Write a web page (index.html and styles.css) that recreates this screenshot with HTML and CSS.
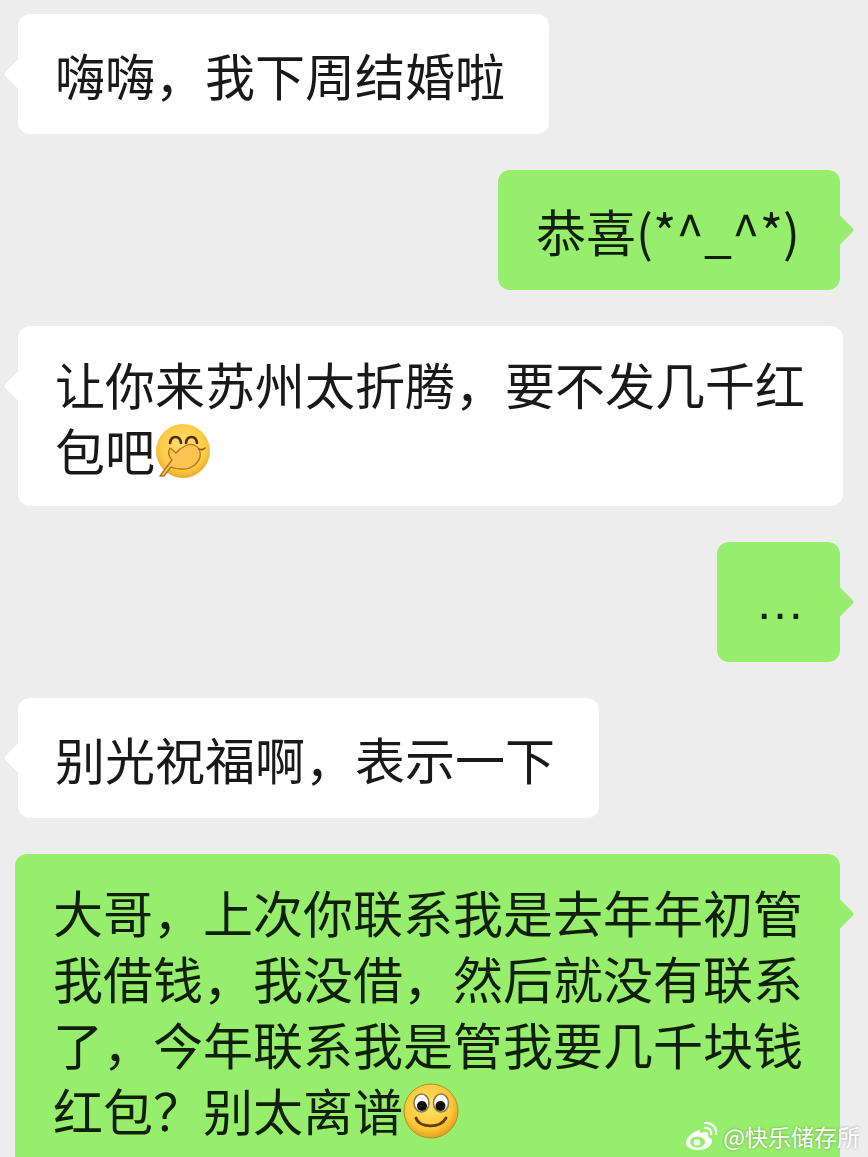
FILE: index.html
```html
<!DOCTYPE html>
<html lang="zh-CN">
<head>
<meta charset="utf-8">
<title>聊天记录</title>
<link rel="stylesheet" href="styles.css">
</head>
<body>
<main class="chat">
  <div class="bubble in short">嗨嗨，我下周结婚啦</div>
  <div class="bubble out short">恭喜(*^_^*)</div>
  <div class="bubble in wide"><p>让你来苏州太折腾，要不发几千红包吧<svg class="emoji" viewBox="0 0 56 56" aria-hidden="true">
    <defs><radialGradient id="f1" cx="0.5" cy="0.42" r="0.6"><stop offset="0" stop-color="#ffdf6b"/><stop offset="0.7" stop-color="#fbcb45"/><stop offset="1" stop-color="#eda52a"/></radialGradient></defs>
    <circle cx="28" cy="28" r="27" fill="url(#f1)"/>
    <path d="M18 20c1-8 10-8 11 0" transform="translate(-3 0)" fill="none" stroke="#4a2d12" stroke-width="2.6" stroke-linecap="round"/>
    <path d="M31 20c1-8 10-8 11 0" fill="none" stroke="#4a2d12" stroke-width="2.6" stroke-linecap="round"/>
    <path d="M5 53 L17 37 C13 33 13 28 15 25 C18 27 19 28 21 30 C26 24 34 20 39 22 C44 24 46 29 45 34 C43 41 35 47 27 46 C22 46 18 45 16 44 L9 53 Z" fill="#fbc452" stroke="#b5701f" stroke-width="1.3" stroke-linejoin="round"/>
    <path d="M44 26c2 1 4 1 6-1" fill="none" stroke="#8a5a1c" stroke-width="1.6" stroke-linecap="round"/>
  </svg></p></div>
  <div class="bubble out short dots"><span class="ellipsis">…</span></div>
  <div class="bubble in short">别光祝福啊，表示一下</div>
  <div class="bubble out last"><p>大哥，上次你联系我是去年年初管我借钱，我没借，然后就没有联系了，今年联系我是管我要几千块钱红包？别太离谱<svg class="emoji" viewBox="0 0 56 56" aria-hidden="true">
    <defs><radialGradient id="f2" cx="0.45" cy="0.4" r="0.62"><stop offset="0" stop-color="#ffe268"/><stop offset="0.7" stop-color="#fcc838"/><stop offset="1" stop-color="#e29a1e"/></radialGradient></defs>
    <circle cx="28" cy="28" r="27" fill="url(#f2)" stroke="#b98a2c" stroke-width="1"/>
    <ellipse cx="18.500" cy="20" rx="7.500" ry="9" fill="#fff" stroke="#8d7a4a" stroke-width="1.600"/>
    <ellipse cx="38" cy="20" rx="7.500" ry="9" fill="#fff" stroke="#8d7a4a" stroke-width="1.600"/>
    <circle cx="19" cy="23" r="5" fill="#0d0d0d"/>
    <circle cx="37.500" cy="23" r="5" fill="#0d0d0d"/>
    <path d="M13 35c3 10 24 11 30 0" fill="none" stroke="#6a3c0c" stroke-width="2.800" stroke-linecap="round"/>
  </svg></p></div>
</main>
<aside class="mark">
  <svg class="weibo" viewBox="0 0 34 30" aria-hidden="true">
    <path d="M14 9C7 11 1 17 1 22c0 4 6 7 12 7 8 0 14-4 14-9 0-3-3-4-4-4 1-3 0-5-3-5-2 0-4 1-5 1 0-2 0-4-1-3z" fill="#fff"/>
    <ellipse cx="12.500" cy="21" rx="7.500" ry="5.500" fill="#97ee6c"/>
    <circle cx="12" cy="21.500" r="3.300" fill="#fff"/>
    <path d="M20 2c6-1 12 4 11 11M20 7c3-1 7 2 6 6" fill="none" stroke="#fff" stroke-width="2.200" stroke-linecap="round"/>
  </svg>
  <span class="handle">@快乐储存所</span>
</aside>
</body>
</html>
```
FILE: styles.css
```css
* { box-sizing: border-box; }

html, body {
  margin: 0;
  height: 1157px;
  overflow: hidden;
}

body {
  position: relative;
  background: #ededed;
  color: #191919;
  font-family: "Noto Sans CJK SC", "Noto Sans", sans-serif;
}

.chat {
  display: flex;
  flex-direction: column;
  align-items: flex-start;
  gap: 36px;
  padding: 14px 28px 0 18px;
}

.bubble {
  position: relative;
  display: flex;
  align-items: center;
  min-height: 120px;
  border-radius: 12px;
  font-size: 50px;
  line-height: 66px;
  white-space: normal;
}

.bubble p { margin: 0; }

.bubble::after {
  content: "";
  position: absolute;
  top: 49px;
  width: 22px;
  height: 22px;
  border-radius: 3px;
  transform: rotate(45deg);
}

.in { background: #fff; }
.in::after { left: -10px; background: #fff; }

.out { align-self: flex-end; background: #97ee6c; color: #0f1f08; }
.out::after { right: -10px; background: #97ee6c; }

.short { padding: 24px 44px 24px 37px; }
.out.short { padding: 24px 40px 24px 38px; }
.wide { width: 825px; padding: 24px 38px 24px 37px; }
.last { width: 825px; margin-right: 0; padding: 24px 37px 60px 38px; }
.last::after { top: 49px; }

.dots { width: 123px; }
.ellipsis { font-family: "Liberation Sans", sans-serif; }

.emoji {
  width: 56px;
  height: 56px;
  vertical-align: -8px;
}

.mark {
  position: absolute;
  right: 8px;
  bottom: 6px;
  display: flex;
  align-items: center;
  gap: 4px;
  color: #fff;
  text-shadow: 0 0 3px rgba(0, 0, 0, 0.35);
}

.weibo { width: 34px; height: 30px; }
.handle { font-size: 23px; line-height: 30px; }
```
